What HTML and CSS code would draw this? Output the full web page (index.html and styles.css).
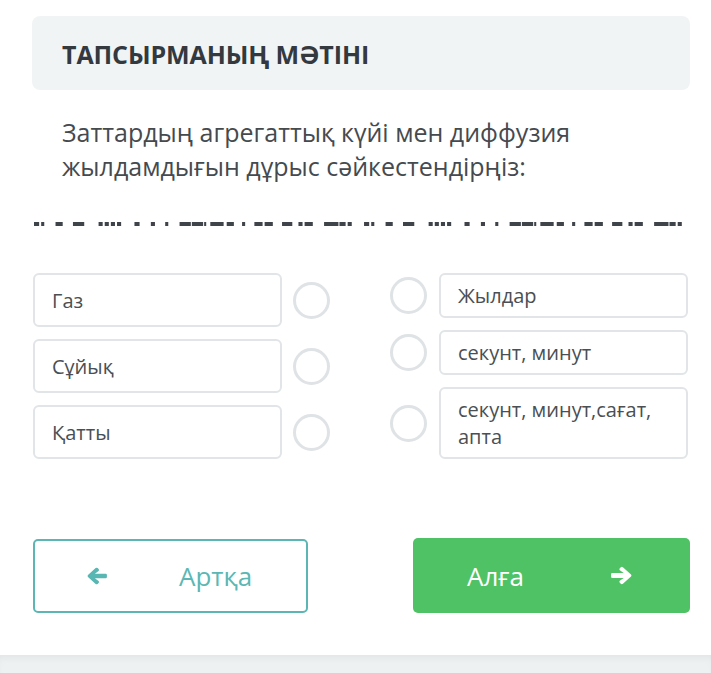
FILE: index.html
```html
<!DOCTYPE html>
<html lang="kk">
<head>
<meta charset="utf-8">
<title>Тапсырма</title>
<link rel="stylesheet" href="styles.css">
</head>
<body>
<main class="card">
  <div class="head"><h1 class="title">ТАПСЫРМАНЫҢ МӘТІНІ</h1></div>
  <p class="question">Заттардың агрегаттық күйі мен диффузия жылдамдығын дұрыс сәйкестендірңіз:</p>
  <svg class="dashes" width="656" height="4" viewBox="0 0 640 3" preserveAspectRatio="none" aria-hidden="true">
    <g fill="#3f444a">
      <rect x="0" y="0" width="5" height="3"/><rect x="7" y="0" width="3" height="3"/><rect x="21" y="0" width="7" height="3"/><rect x="38" y="0" width="11" height="3"/>
      <rect x="63" y="0" width="4" height="3"/><rect x="69" y="0" width="4" height="3"/><rect x="75" y="0" width="4" height="3"/><rect x="81" y="0" width="4" height="3"/>
      <rect x="98" y="0" width="5" height="3"/><rect x="114" y="0" width="4" height="3"/><rect x="128" y="0" width="3" height="3"/>
      <rect x="142" y="0" width="11" height="3"/><rect x="154" y="0" width="11" height="3"/><rect x="166" y="0" width="2" height="3"/><rect x="172" y="0" width="13" height="3"/><rect x="188" y="0" width="7" height="3"/>
      <rect x="203" y="0" width="3" height="3"/><rect x="215" y="0" width="8" height="3"/><rect x="225" y="0" width="8" height="3"/><rect x="242" y="0" width="10" height="3"/><rect x="258" y="0" width="4" height="3"/><rect x="264" y="0" width="8" height="3"/>
      <rect x="283" y="0" width="14" height="3"/><rect x="298" y="0" width="6" height="3"/><rect x="306" y="0" width="4" height="3"/>
    </g>
    <g fill="#3f444a" transform="translate(322 0)">
      <rect x="0" y="0" width="5" height="3"/><rect x="7" y="0" width="3" height="3"/><rect x="21" y="0" width="7" height="3"/><rect x="38" y="0" width="11" height="3"/>
      <rect x="63" y="0" width="4" height="3"/><rect x="69" y="0" width="4" height="3"/><rect x="75" y="0" width="4" height="3"/><rect x="81" y="0" width="4" height="3"/>
      <rect x="98" y="0" width="5" height="3"/><rect x="114" y="0" width="4" height="3"/><rect x="128" y="0" width="3" height="3"/>
      <rect x="142" y="0" width="11" height="3"/><rect x="154" y="0" width="11" height="3"/><rect x="166" y="0" width="2" height="3"/><rect x="172" y="0" width="13" height="3"/><rect x="188" y="0" width="7" height="3"/>
      <rect x="203" y="0" width="3" height="3"/><rect x="215" y="0" width="8" height="3"/><rect x="225" y="0" width="8" height="3"/><rect x="242" y="0" width="10" height="3"/><rect x="258" y="0" width="4" height="3"/><rect x="264" y="0" width="8" height="3"/>
      <rect x="283" y="0" width="14" height="3"/><rect x="298" y="0" width="6" height="3"/><rect x="306" y="0" width="4" height="3"/>
    </g>
  </svg>

  <div class="match">
    <div class="col col-left">
      <div class="row row-l"><div class="box box-l">Газ</div><span class="dot"></span></div>
      <div class="row row-l"><div class="box box-l">Сұйық</div><span class="dot"></span></div>
      <div class="row row-l"><div class="box box-l">Қатты</div><span class="dot"></span></div>
    </div>
    <div class="col col-right">
      <div class="row"><span class="dot"></span><div class="box box-r">Жылдар</div></div>
      <div class="row"><span class="dot"></span><div class="box box-r">секунт, минут</div></div>
      <div class="row"><span class="dot"></span><div class="box box-r">секунт, минут,сағат, апта</div></div>
    </div>
  </div>

  <div class="nav">
    <button class="btn btn-back" type="button">
      <svg class="arrow" width="22" height="18" viewBox="0 0 24 20" aria-hidden="true"><path d="M10.5 1.2 L2 9 Q1 10 2 11 L10.5 18.8 Q11.6 19.8 12.7 18.8 L13.8 17.7 Q14.8 16.6 13.8 15.6 L9.6 12.6 H21.6 Q23 12.6 23 11.2 V8.8 Q23 7.4 21.6 7.4 H9.6 L13.8 4.4 Q14.8 3.4 13.8 2.3 L12.7 1.2 Q11.6 0.2 10.5 1.2 Z" fill="#58b6b3"/></svg>
      <span class="btn-label">Артқа</span>
    </button>
    <button class="btn btn-next" type="button">
      <span class="btn-label">Алға</span>
      <svg class="arrow" width="25" height="19" viewBox="0 0 24 20" aria-hidden="true"><path d="M13.5 1.2 L22 9 Q23 10 22 11 L13.5 18.8 Q12.4 19.8 11.3 18.8 L10.2 17.7 Q9.2 16.6 10.2 15.6 L14.4 12.6 H2.4 Q1 12.6 1 11.2 V8.8 Q1 7.4 2.4 7.4 H14.4 L10.2 4.4 Q9.2 3.4 10.2 2.3 L11.3 1.2 Q12.4 0.2 13.5 1.2 Z" fill="#ffffff"/></svg>
    </button>
  </div>
</main>
<footer class="band"></footer>
</body>
</html>
```

FILE: styles.css
```css
* { box-sizing: border-box; }
html, body { margin: 0; padding: 0; }
body {
  background: #ffffff;
  font-family: "Open Sans", "Noto Sans", sans-serif;
  color: #454a4f;
  width: 711px;
}
.card {
  width: 658px;
  margin-left: 32px;
  padding-top: 16px;
  padding-bottom: 42px;
}
.head {
  height: 74px;
  background: #f1f4f5;
  border-radius: 8px;
  display: flex;
  align-items: center;
  padding-left: 30px;
}
.title {
  margin: 0;
  font-size: 25px;
  font-weight: 700;
  color: #33393f;
  letter-spacing: -0.1px;
  line-height: 1;
  padding-top: 2px;
}
.question {
  margin: 25px 0 0 30px;
  font-size: 25px;
  line-height: 34px;
  color: #454a4f;
  width: 580px;
}
.dashes {
  display: block;
  margin: 39px 0 0 2px;
}
.match {
  margin-top: 47px;
  display: flex;
  justify-content: space-between;
  padding-left: 1px;
  padding-right: 2px;
}
.col {
  display: flex;
  flex-direction: column;
  gap: 12px;
}
.row {
  display: flex;
  align-items: center;
}
.box {
  border: 2px solid #e1e5e7;
  border-radius: 6px;
  background: #fff;
  font-size: 20px;
  color: #4a4f54;
  padding-left: 17px;
}
.box-l {
  width: 249px;
  height: 54px;
  display: flex;
  align-items: center;
}
.box-r {
  width: 249px;
  padding: 7px 12px 7px 17px;
  line-height: 27px;
}
.dot {
  width: 37px;
  height: 37px;
  border-radius: 50%;
  border: 3px solid #dfe3e5;
  flex: none;
}
.row-l .dot { margin-left: 11px; }
.col-right .dot { margin-right: 12px; }
.nav {
  margin-top: 79px;
  display: flex;
  justify-content: space-between;
  align-items: center;
}
.btn {
  font-family: "Open Sans", "Noto Sans", sans-serif;
  font-size: 26px;
  border-radius: 5px;
  display: flex;
  align-items: center;
  cursor: pointer;
  padding: 0;
}
.btn-back {
  width: 275px;
  height: 74px;
  margin-left: 1px;
  background: #fff;
  border: 2px solid #5cb7b4;
  color: #5cb7b4;
  padding-left: 51px;
}
.btn-back .btn-label { margin-left: 71px; }
.btn-next {
  width: 277px;
  height: 75px;
  background: #4fc265;
  border: none;
  color: #ffffff;
  padding-left: 54px;
}
.btn-next .arrow { margin-left: 85px; }
.band {
  height: 40px;
  background: #eef1f2;
  box-shadow: inset 0 6px 8px -4px rgba(0,0,0,0.06);
}
```
